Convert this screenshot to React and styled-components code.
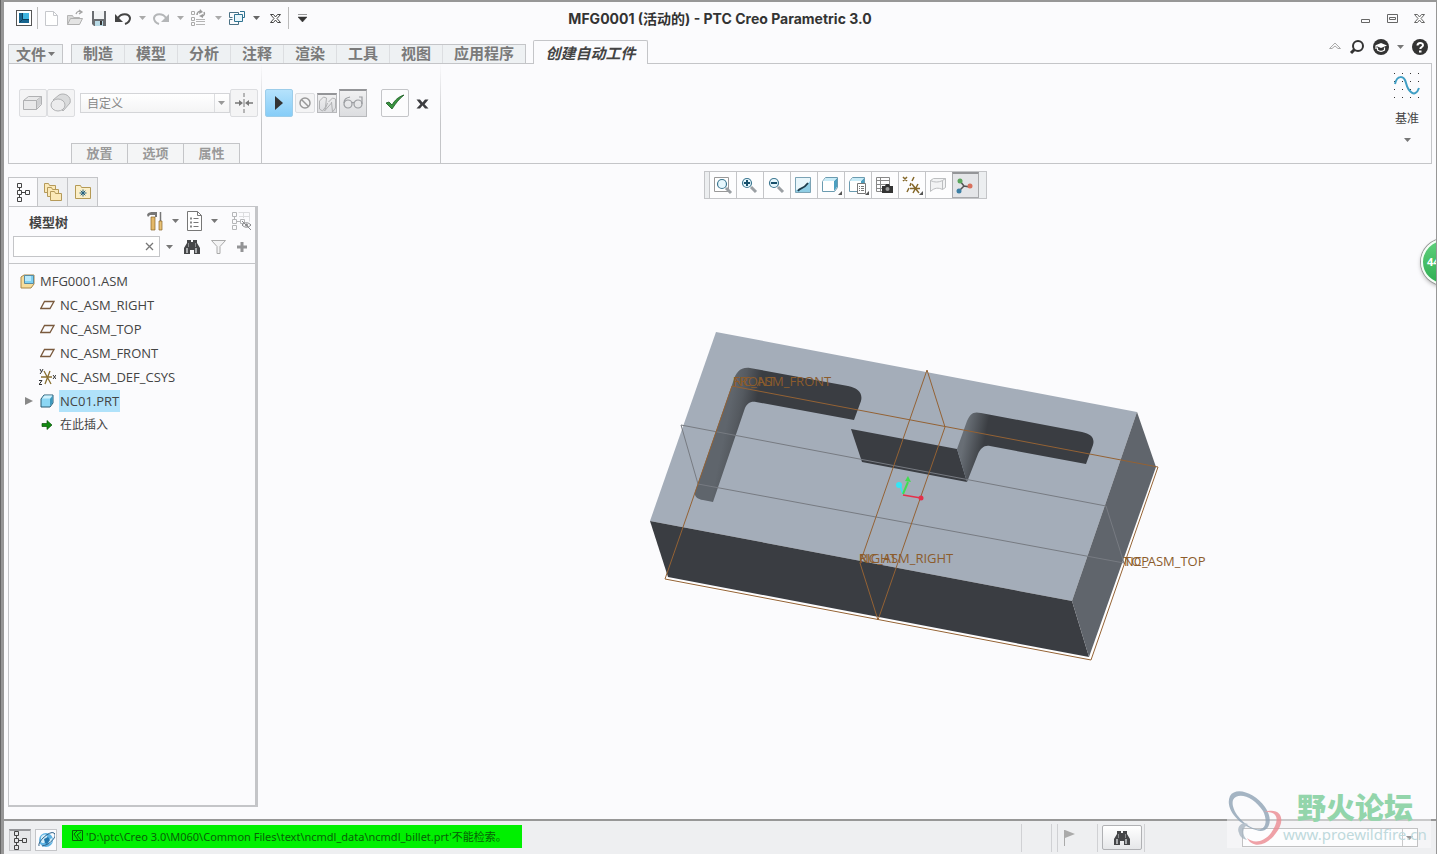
import React, {useState} from 'react'
import styled, {createGlobalStyle, css} from 'styled-components'

const caretPath = 'M0 0h7L3.5 4z'

const Caret = ({color = '#777'}) => (
    <svg width="7" height="4" viewBox="0 0 7 4"><path d={caretPath} fill={color} /></svg>
)

const Icon = ({w = 18, h = 18, children}) => (
    <svg width={w} height={h} viewBox={`0 0 ${w} ${h}`} fill="none">{children}</svg>
)

/* ---------- quick access icons ---------- */
const LogoIcon = () => (
    <Icon>
        <rect x="1.5" y="1.5" width="15" height="15" fill="#fff" stroke="#555" />
        <path d="M4 4h10v10H4z" fill="#17658f" />
        <path d="M8 4h6v6H8z" fill="#3fb4df" />
        <path d="M7.500 4v6.500H14M4.500 13.500l3-3" stroke="#0c3f5c" />
    </Icon>
)
const NewIcon = () => (
    <Icon>
        <path d="M3.500 2.500h8l4 4v10h-12z" fill="#fff" stroke="#c6c8cc" />
        <path d="M11.500 2.500v4h4" stroke="#c6c8cc" />
    </Icon>
)
const OpenIcon = () => (
    <Icon>
        <path d="M1.500 15.500v-9h5l1 2h6v2" fill="#d8d8d8" stroke="#b5b5b5" />
        <path d="M4.500 9.500h12l-3 6h-12z" fill="#e4e4e4" stroke="#b0b0b0" />
        <path d="M10 5c1-3 3-3 5-2M13 1l3 2-3 2" stroke="#a5a5a5" strokeWidth="1.300" />
    </Icon>
)
const SaveIcon = () => (
    <Icon>
        <path d="M2 2h14v15H4l-2-2z" fill="#6a6d71" />
        <path d="M4 2h10v8H4z" fill="#f1f3f5" />
        <path d="M5 12h8v5H5z" fill="#b8dae6" />
        <path d="M10 12h2v4h-2z" fill="#333" />
    </Icon>
)
const UndoIcon = () => (
    <Icon>
        <path d="M4 9c3-5 11-5 12 0 0 3-2 5-5 6" stroke="#444" strokeWidth="2" />
        <path d="M1 5v8h8z" fill="#444" />
    </Icon>
)
const RedoIcon = () => (
    <Icon>
        <path d="M14 9C11 4 3 4 2 9c0 3 2 5 5 6" stroke="#b4b6b8" strokeWidth="2" />
        <path d="M17 5v8H9z" fill="#b4b6b8" />
    </Icon>
)
const RegenIcon = () => (
    <Icon>
        <path d="M1.500 2.500h3v3h-3zM1.500 8.500h3v3h-3zM1.500 13.500h3v3h-3z" stroke="#aaa" />
        <path d="M6 10.500h9M6 12.500h9M6 15.500h9" stroke="#b5b5b5" />
        <path d="M7 6c0-3 2-4 4-3M14 3c1 2 0 4-2 4" stroke="#999" strokeWidth="1.500" />
        <path d="M10 0l3 3-4 2zM13 5l-4 2 4 2z" fill="#999" />
    </Icon>
)
const WindowsIcon = () => (
    <Icon>
        <path d="M1.500 8.500v-5h9v3" stroke="#4a7184" />
        <path d="M1.500 10.500v5h9v-3M1.500 10.500h3M1.500 8.500h3" stroke="#4a7184" />
        <path d="M6.500 5.500h8v7h-8z" fill="#e9f6fb" stroke="#2f7391" />
        <path d="M12 2.500h4.500v6H15" stroke="#2f7391" />
    </Icon>
)
const CrossIcon = ({color = '#444'}) => (
    <Icon w={13} h={13}>
        <path d="M1.500 2.500h3l2 2.500 2-2.500h3l-3.500 4 3.500 4h-3l-2-2.500-2 2.500h-3l3.500-4z" fill="#fff" stroke={color} />
    </Icon>
)
const MinIcon = () => <Icon w={13} h={13}><path d="M2.500 7.500h8v3h-8z" stroke="#666" /></Icon>
const MaxIcon = () => (
    <Icon w={13} h={13}><path d="M1.500 2.500h10v8h-10zM3.500 5.500h6v2h-6z" stroke="#666" /></Icon>
)

/* ---------- help icons ---------- */
const ChevronUp = () => (
    <Icon w={12} h={10}><path d="M.5 6.500L6 1l5.500 5.500H9L6 4 3 6.500z" stroke="#aaa" /></Icon>
)
const SearchIcon = () => (
    <Icon w={16} h={16}>
        <circle cx="9" cy="7" r="5" stroke="#333" strokeWidth="2" />
        <path d="M5.500 10.500L2 14" stroke="#333" strokeWidth="3" />
    </Icon>
)
const LearnIcon = () => (
    <Icon w={16} h={16}>
        <circle cx="8" cy="8" r="8" fill="#333" />
        <path d="M2 6.500L8 4l6 2.500L8 9z" fill="#fff" />
        <path d="M4.500 8.500V11c2 1.500 5 1.500 7 0V8.500M3 7v3" stroke="#fff" strokeWidth="1.200" />
    </Icon>
)
const HelpIcon = () => (
    <Icon w={16} h={16}>
        <circle cx="8" cy="8" r="8" fill="#333" />
        <path d="M5.500 6.500c0-3.500 5.500-3.300 5.500-.3C11 8 8.300 8 8.300 10" stroke="#fff" strokeWidth="2" />
        <path d="M7 11.500h2.500v2H7z" fill="#fff" />
    </Icon>
)

/* ---------- dashboard icons ---------- */
const BlockIcon = () => (
    <Icon w={22} h={20}>
        <path d="M1.500 7.500l5-4h13v8l-5 5h-13z" fill="#e9e9ea" stroke="#b0b1b3" />
        <path d="M1.500 7.500h13v9M14.500 7.500l5-4" stroke="#b0b1b3" />
        <path d="M15 8l4-4v7l-4 4z" fill="#cfd0d2" />
    </Icon>
)
const RoundIcon = () => (
    <Icon w={22} h={20}>
        <path d="M3 7l6-5c5-3 13 1 11 8l-7 8z" fill="#dadbdc" stroke="#b0b1b3" />
        <ellipse cx="8" cy="12" rx="7" ry="6" fill="#ececed" stroke="#b0b1b3" />
    </Icon>
)
const MergeIcon = () => (
    <Icon w={18} h={20}>
        <path d="M9 0v4M9 6v8M9 16v4" stroke="#777" />
        <path d="M0 10h6M12 10h6" stroke="#777" strokeWidth="1.500" />
        <path d="M4 7l4 3-4 3zM14 7l-4 3 4 3z" fill="#777" />
    </Icon>
)
const PlayIcon = () => <Icon w={12} h={16}><path d="M2 1l8 7-8 7z" fill="#333" /></Icon>
const BanIcon = () => (
    <Icon w={14} h={14}>
        <circle cx="7" cy="7" r="5" stroke="#999" strokeWidth="1.500" />
        <path d="M3.500 3.500l7 7" stroke="#999" strokeWidth="1.500" />
    </Icon>
)
const MeshIcon = () => (
    <Icon w={18} h={18}>
        <path d="M1.500 6l4-4 3 1-1 9-3 4-3-2zM10.500 7l4-4 3 1v9l-3 4-1-10M9.500 8l-3 8 7-8" stroke="#b0b1b3" />
    </Icon>
)
const GlassesIcon = () => (
    <Icon w={20} h={16}>
        <circle cx="5" cy="8" r="4" stroke="#9a9ca0" strokeWidth="1.200" />
        <circle cx="15" cy="8" r="4" stroke="#9a9ca0" strokeWidth="1.200" />
        <path d="M1 7c0-4 2-5 6-6M19 8V1h-3M9 7c1-1 1-1 2 0" stroke="#9a9ca0" strokeWidth="1.200" />
    </Icon>
)
const CheckIcon = () => (
    <Icon w={20} h={18}>
        <path d="M1 9l3-1 3 3c3-5 6-8 12-10C14 5 11 9 7 15z" fill="#3a9440" stroke="#17591f" strokeWidth=".8" />
    </Icon>
)
const QuitIcon = () => (
    <Icon w={13} h={13}><path d="M.5 2.500H4l2.500 3 2.500-3h3.500L8.600 7.200l3.900 4.300H9l-2.500-3-2.500 3H.5l3.900-4.300z" fill="#3c3d40" /></Icon>
)
const DatumIcon = () => (
    <Icon w={28} h={28}>
        {[1, 9, 17, 25].map(y => [1, 9, 17, 25].map(x => (
            <path key={`${x}-${y}`} d={`M${x} ${y}h1v1h-1z`} fill="#333" />
        )))}
        <path d="M2 12C4 3 11 3 13 11s9 16 13 5" stroke="#3f9ec4" strokeWidth="2" />
    </Icon>
)

/* ---------- navigator icons ---------- */
const TreeIcon = ({color = '#444'}) => (
    <Icon w={14} h={20}>
        <path d="M1.500 1.500h4v4h-4zM1.500 8.500h4v4h-4zM9.500 8.500h4v4h-4zM1.500 15.500h4v4h-4zM3.500 5.500v3M3.500 12.500v3M5.500 10.500h4" stroke={color} />
    </Icon>
)
const Folder = ({x, y}) => (
    <path d={`M${x} ${y}h4l1 2h6v7H${x}z`} fill="#fbe9b8" stroke="#b59a5a" />
)
const FoldersIcon = () => (
    <Icon w={20} h={20}><Folder x={1.5} y={1.5} /><Folder x={4.5} y={5.5} /><Folder x={7.5} y={9.5} /></Icon>
)
const FavIcon = () => (
    <Icon w={18} h={16}>
        <path d="M1.500 14.500v-13h5l1 2h9v11z" fill="#fbefc8" stroke="#b59a55" />
        <path d="M9 5.500v7M5.500 9h7M6.700 6.700l4.600 4.600M11.300 6.700l-4.600 4.600" stroke="#1f5f80" />
    </Icon>
)
const ToolsIcon = () => (
    <Icon w={18} h={20}>
        <path d="M1 4c1-3 4-3 6-3h4v5H9V4H4L2 6z" fill="#777" />
        <path d="M5 6h4v13H5z" fill="#e3b869" stroke="#8a6525" strokeWidth=".7" />
        <path d="M14.500 1v9" stroke="#777" strokeWidth="1.500" />
        <path d="M13 10h3v9h-3z" fill="#e8c277" stroke="#8a6525" strokeWidth=".7" />
    </Icon>
)
const ListIcon = () => (
    <Icon w={17} h={20}>
        <path d="M1.500.5h10l4 4v15h-14z" fill="#fff" stroke="#777" />
        <path d="M11.500.5v4h4M7.500 7.500h5M7.500 11.500h5M7.500 15.500h5" stroke="#777" />
        <path d="M4 6.500h2v2H4zM4 10.500h2v2H4zM4 14.500h2v2H4z" fill="#888" />
    </Icon>
)
const HiddenTreeIcon = () => (
    <Icon w={21} h={20}>
        <path d="M1.500 1.500h4v4h-4zM1.500 8.500h4v4h-4zM9.500 8.500h4v4h-4zM1.500 14.500h4v4h-4zM3.500 5.500v3M5.500 10.500h4" stroke="#b5b6b8" />
        <path d="M7.500 1.500h11v9M12.500 2v5M8 5.500h10" stroke="#dcdddf" />
        <path d="M11 14c3-3 6-3 9 0-3 3-6 3-9 0zM11 10l9 9" stroke="#88898c" />
        <circle cx="15.500" cy="14" r="1.500" fill="#88898c" />
    </Icon>
)
const BinocularsIcon = () => (
    <Icon w={18} h={16}>
        <path d="M4 1h4v2h2V1h4v3l3 5v6h-6v-4H7v4H1V9l3-5z" fill="#454648" />
        <path d="M3 9h2v5H3zM12 9h2v5h-2z" fill="#a9abad" />
        <path d="M5 4h1v4H5zM12 4h1v4h-1z" fill="#8a8c8e" />
    </Icon>
)
const FunnelIcon = () => (
    <Icon w={17} h={16}><path d="M1.500 1.500h14l-5.500 6v7H7v-7z" fill="#f3f3f4" stroke="#aaa" /></Icon>
)
const PlusIcon = () => <Icon w={12} h={12}><path d="M1 6h10M6 1v10" stroke="#939496" strokeWidth="3" /></Icon>

const AsmIcon = () => (
    <Icon w={15} h={15}>
        <path d="M1 3l3-2h10v9l-3 4H1z" fill="#f5dc9c" stroke="#a98644" />
        <path d="M4.500 1.500h9v8h-9z" fill="#7dd0f2" stroke="#5a8ba0" />
        <path d="M5 2h6v5H5z" fill="#b9e9fb" />
    </Icon>
)
const PlaneIcon = () => <Icon w={15} h={10}><path d="M4.500 1.500h9.500l-4 7H.8z" stroke="#7a5a3e" strokeWidth="1.300" /></Icon>
const CsysIcon = () => (
    <Icon w={17} h={16}>
        <path d="M2 8h11M5 2l7 13M11 2L6 15" stroke="#8a7030" strokeWidth="1.300" />
        <path d="M1 0l1.500 3L4 0M2.500 3L1 5M14 6l3 4M17 6l-3 4M0 11.500h3l-3 4h3" stroke="#333" />
    </Icon>
)
const PartIcon = () => (
    <Icon w={14} h={14}>
        <path d="M1 5l3-4h9v8l-3 4H1z" fill="#8bd6f4" stroke="#2b5b72" />
        <path d="M2 4.500l2.500-3h8l-2.500 3z" fill="#d0f1fc" />
        <path d="M10 5l2.500-3v7L10 12z" fill="#3d98bd" />
    </Icon>
)
const InsertIcon = () => <Icon w={12} h={12}><path d="M1 4.500h5v-3L11 6l-5 4.500v-3H1z" fill="#118a11" stroke="#0a500a" strokeWidth=".7" /></Icon>
const GlobeIcon = () => (
    <Icon w={17} h={17}>
        <circle cx="8" cy="9" r="7" fill="#5fb2e2" />
        <path d="M3 6c2-3 5-3 6-1s-3 3-2 5-3 3-4 1zM10 9l4-2c1 3 0 5-3 6z" fill="#d4eefa" />
        <path d="M6 8l4-2 2 3-3 4-2-1z" fill="#2477ae" />
        <path d="M1 15C-1 11 12-1 16 2s-4 12-12 13" stroke="#2c5f86" />
    </Icon>
)
const FlagIcon = () => <Icon w={14} h={18}><path d="M2.500 1v16" stroke="#aaa" /><path d="M3 1l10 4-10 4z" fill="#aaa" /></Icon>
const GlyphIcon = () => (
    <Icon w={13} h={13}><path d="M1.500 1.500h10v10h-10zM6 2L3 5l4 6M10 3L6 6l4 5" stroke="#086008" /></Icon>
)

/* ---------- graphics toolbar icons ---------- */
const Lens = ({x, y}) => (
    <>
        <path d={`M${x + 4} ${y + 4}l5 5`} stroke="#9a9fa3" strokeWidth="3" />
        <circle cx={x} cy={y} r="4.500" fill="#e6f7fd" stroke="#3d7791" strokeWidth="1.200" />
    </>
)
const cube = <><path d="M1.500 5.500l3-4h12v10l-3 4h-12z" fill="#fff" stroke="#6b9bb0" /><path d="M13 5l3-3v9l-3 4z" fill="#4c9fc0" /><path d="M2 5l3-3h11l-3 3z" fill="#c9ecf8" /></>
const viewIcons = [
    {label: '重新调整', icon: <><path d="M1.500 1.500h14v14h-14z" fill="#fff" stroke="#999" /><Lens x={9} y={8} /></>},
    {label: '放大', icon: <><Lens x={7} y={7} /><path d="M4 7h6M7 4v6" stroke="#17506c" strokeWidth="2" /></>},
    {label: '缩小', icon: <><Lens x={7} y={7} /><path d="M4 7h6" stroke="#17506c" strokeWidth="2" /></>},
    {label: '重画', icon: <><path d="M1.500 1.500h15v15h-15z" fill="#8fcde4" stroke="#7ba3b5" /><path d="M2 2h14v3C13 9 8 13 2 14z" fill="#e8f6fb" /><path d="M4 15c2-4 5-1 10-8" stroke="#1f3d4c" strokeWidth="1.800" /></>},
    {label: '显示样式', menu: true, icon: cube},
    {label: '已保存方向', menu: true, icon: <>{cube}<path d="M9.500 7.500h8v10h-8z" fill="#fff" stroke="#777" /><path d="M11 10.500h1M13 10.500h3M11 12.500h1M13 12.500h3M11 14.500h1M13 14.500h3" stroke="#777" /></>},
    {label: '视图管理器', icon: <><path d="M1.500 1.500h13v14h-13zM1.500 4.500h13M1.500 8.500h13M1.500 12.500h13M5.500 1.500v14" stroke="#888" /><path d="M7 10h3l1-2h3l1 2h3v7H7z" fill="#333" /><circle cx="12.500" cy="13" r="2" fill="#9a9a9a" /></>},
    {label: '基准显示过滤器', menu: true, icon: <><path d="M1 1l4 4M5 1L1 5M12 1L10 5M9 7l-1 3M7 12l-2 4M10 8l7 9M16 8l-5 9M8 12.500h10" stroke="#85682a" strokeWidth="1.500" /></>},
    {label: '注释显示', icon: <><path d="M1.500 4.500c4 2 8 2 12 0v9c-4-2-8-2-12 2zM1.500 4.500l3-2h12v9l-3 2M13.500 4.500l3-2" fill="#f2f3f4" stroke="#bcbec0" /></>},
    {label: '旋转中心', on: true, icon: <><path d="M5 4l4 5 6 1M9 9l-5 5" stroke="#555" strokeWidth="1.500" /><circle cx="5" cy="4" r="2.500" fill="#5aa55c" /><circle cx="15" cy="9" r="2.500" fill="#d9705c" /><circle cx="4" cy="14" r="2.500" fill="#3c7fa5" /></>},
]

const quickItems = [
    {label: '新建', icon: <NewIcon />},
    {label: '打开', icon: <OpenIcon />},
    {label: '保存', icon: <SaveIcon />},
    {label: '撤消', icon: <UndoIcon />, menu: '#aaa'},
    {label: '重做', icon: <RedoIcon />, menu: '#aaa'},
    {label: '重新生成', icon: <RegenIcon />, menu: '#aaa'},
    {label: '窗口', icon: <WindowsIcon />, menu: '#666'},
    {label: '关闭', icon: <CrossIcon />},
]

const tabs = ['制造', '模型', '分析', '注释', '渲染', '工具', '视图', '应用程序']

const treeItems = [
    {name: 'NC_ASM_RIGHT', icon: <PlaneIcon />},
    {name: 'NC_ASM_TOP', icon: <PlaneIcon />},
    {name: 'NC_ASM_FRONT', icon: <PlaneIcon />},
    {name: 'NC_ASM_DEF_CSYS', icon: <CsysIcon />},
    {name: 'NC01.PRT', icon: <PartIcon />, expandable: true},
    {name: '在此插入', icon: <InsertIcon />, small: true},
]

const Model = () => (
    <Canvas viewBox="258 199 1178 620" role="img" aria-label="NC01">
        <defs>
            <linearGradient id="wallLeft" gradientUnits="userSpaceOnUse" x1="733" y1="390" x2="758" y2="395">
                <stop offset="0" stopColor="#5f656c" />
                <stop offset=".4" stopColor="#555a60" />
                <stop offset="1" stopColor="#3a3d42" />
            </linearGradient>
            <linearGradient id="wallMid" gradientUnits="userSpaceOnUse" x1="966" y1="430" x2="986" y2="434">
                <stop offset="0" stopColor="#686e75" />
                <stop offset=".4" stopColor="#565b61" />
                <stop offset="1" stopColor="#3a3d42" />
            </linearGradient>
        </defs>
        <path d="M1157 468l-67 191-425-80" stroke="#fff" strokeWidth="3" fill="none" />
        <path d="M716 332l421 80-65 189-422-80z" fill="#a4adb9" />
        <path d="M650 521l422 80 17 56-421-80z" fill="#3a3d42" />
        <path d="M1137 412l19 55-67 190-17-56z" fill="#60656c" />
        <path d="M695 492l38-110c3-10 7-15 17-14l98 18c10 2 15 7 13 15l-7 19-98-18c-6-1-9 2-11 6l-32 94-10-2c-6-1-9-4-8-8z" fill="url(#wallLeft)" />
        <path d="M851 429l106 20 10 33-105-20z" fill="#3a3d42" />
        <path d="M957 449l10-28c3-7 6-10 14-8l101 19c9 2 13 6 11 13l-7 19-96-18c-6-1-9 2-12 8l-11 28z" fill="url(#wallMid)" />
        <g fill="none" stroke="#777b82">
            <path d="M681 425l425 81 18 57-426-79z" />
        </g>
        <g fill="none" stroke="#946234">
            <path d="M732 386l426 81-67 193-426-81z" />
            <path d="M927 370l18 57-67 193-18-57z" />
        </g>
        <path d="M903 494l-3-9" stroke="#2fe6f2" strokeWidth="1.500" />
        <path d="M903 494l5-12" stroke="#42dd50" strokeWidth="2" />
        <path d="M908 476l3 6-6-1z" fill="#42dd50" />
        <path d="M903 495l18 3" stroke="#e5304a" strokeWidth="1.500" />
        <circle cx="899" cy="485" r="3" fill="#35e5f5" />
        <circle cx="921" cy="498" r="2.500" fill="#e5304a" />
        <PlaneLabel x="733" y="386">FRONT</PlaneLabel>
        <PlaneLabel x="733" y="386">NC_ASM_FRONT</PlaneLabel>
        <PlaneLabel x="859" y="563">RIGHT</PlaneLabel>
        <PlaneLabel x="859" y="563">NC_ASM_RIGHT</PlaneLabel>
        <PlaneLabel x="1124" y="566">TOP</PlaneLabel>
        <PlaneLabel x="1124" y="566">NC_ASM_TOP</PlaneLabel>
    </Canvas>
)

export default function App() {
    const [selected, setSelected] = useState('NC01.PRT')
    const [query, setQuery] = useState('')

    return (
        <>
            <GlobalStyle />
            <Window>
                <TitleBar>
                    <QuickBar>
                        <QuickButton aria-label="Creo"><LogoIcon /></QuickButton>
                        <Separator />
                        {quickItems.map(item => (
                            <React.Fragment key={item.label}>
                                <QuickButton aria-label={item.label}>{item.icon}</QuickButton>
                                {item.menu && <CaretButton aria-label={`${item.label}菜单`}><Caret color={item.menu} /></CaretButton>}
                            </React.Fragment>
                        ))}
                        <Separator />
                        <QuickButton aria-label="自定义快速访问工具栏">
                            <Icon w={9} h={8}><path d="M0 .5h9M0 3h9L4.500 8z" fill="#333" stroke="#333" strokeWidth=".5" /></Icon>
                        </QuickButton>
                    </QuickBar>
                    <Title>MFG0001 (活动的) - PTC Creo Parametric 3.0</Title>
                    <WindowButtons>
                        <PlainButton aria-label="最小化"><MinIcon /></PlainButton>
                        <PlainButton aria-label="最大化"><MaxIcon /></PlainButton>
                        <PlainButton aria-label="关闭窗口"><CrossIcon color="#666" /></PlainButton>
                    </WindowButtons>
                </TitleBar>

                <TabRow>
                    <FileTab>文件<Caret /></FileTab>
                    <TabGroup>
                        {tabs.map(tab => <Tab key={tab}>{tab}</Tab>)}
                    </TabGroup>
                    <ActiveTab>创建自动工件</ActiveTab>
                    <HelpButtons>
                        <PlainButton aria-label="最小化功能区"><ChevronUp /></PlainButton>
                        <PlainButton aria-label="搜索"><SearchIcon /></PlainButton>
                        <PlainButton aria-label="学习"><LearnIcon /></PlainButton>
                        <PlainButton aria-label="学习菜单"><Caret /></PlainButton>
                        <PlainButton aria-label="帮助"><HelpIcon /></PlainButton>
                    </HelpButtons>
                </TabRow>

                <Ribbon>
                    <RibbonSection>
                        <Controls>
                            <ToolButton aria-label="矩形工件"><BlockIcon /></ToolButton>
                            <ToolButton aria-label="圆形工件"><RoundIcon /></ToolButton>
                            <SelectBox>
                                <select aria-label="类型" defaultValue="自定义"><option>自定义</option></select>
                                <Caret color="#999" />
                            </SelectBox>
                            <ToolButton aria-label="对齐"><MergeIcon /></ToolButton>
                        </Controls>
                        <SubTabs>
                            <button>放置</button>
                            <button>选项</button>
                            <button>属性</button>
                        </SubTabs>
                    </RibbonSection>
                    <RibbonSection $tight>
                        <Controls>
                            <ToolButton $blue aria-label="继续"><PlayIcon /></ToolButton>
                            <ToolButton $small aria-label="无预览"><BanIcon /></ToolButton>
                            <ToolButton $small $pressed aria-label="分离"><MeshIcon /></ToolButton>
                            <ToolButton $pressed aria-label="预览"><GlassesIcon /></ToolButton>
                            <Spacer />
                            <ToolButton $white aria-label="确定"><CheckIcon /></ToolButton>
                            <QuitButton aria-label="取消"><QuitIcon /></QuitButton>
                        </Controls>
                    </RibbonSection>
                    <DatumButton>
                        <DatumIcon />
                        <span>基准</span>
                        <Caret />
                    </DatumButton>
                </Ribbon>

                <Main>
                    <Navigator>
                        <NavTabs>
                            <NavTab $active aria-label="模型树"><TreeIcon /></NavTab>
                            <NavTab aria-label="文件夹浏览器"><FoldersIcon /></NavTab>
                            <NavTab aria-label="收藏夹"><FavIcon /></NavTab>
                        </NavTabs>
                        <NavBody>
                            <NavHeader>
                                <h2>模型树</h2>
                                <PlainButton aria-label="设置"><ToolsIcon /></PlainButton>
                                <CaretButton aria-label="设置菜单"><Caret /></CaretButton>
                                <PlainButton aria-label="显示"><ListIcon /></PlainButton>
                                <CaretButton aria-label="显示菜单"><Caret /></CaretButton>
                                <HideButton aria-label="隐藏"><HiddenTreeIcon /></HideButton>
                            </NavHeader>
                            <SearchRow>
                                <SearchBox>
                                    <input aria-label="搜索模型树" value={query} onChange={e => setQuery(e.target.value)} />
                                    <PlainButton aria-label="清除" onClick={() => setQuery('')}>
                                        <Icon w={9} h={9}><path d="M1 1l7 7M8 1L1 8" stroke="#777" strokeWidth="1.300" /></Icon>
                                    </PlainButton>
                                </SearchBox>
                                <CaretButton aria-label="搜索选项"><Caret /></CaretButton>
                                <SearchTools>
                                    <PlainButton aria-label="查找"><BinocularsIcon /></PlainButton>
                                    <PlainButton aria-label="过滤"><FunnelIcon /></PlainButton>
                                    <PlainButton aria-label="添加"><PlusIcon /></PlainButton>
                                </SearchTools>
                            </SearchRow>
                            <Tree>
                                <TreeRow $root><TreeGlyph><AsmIcon /></TreeGlyph><TreeName>MFG0001.ASM</TreeName></TreeRow>
                                {treeItems.map(item => (
                                    <TreeRow key={item.name}>
                                        <Expander>{item.expandable && <Icon w={8} h={10}><path d="M0 1l8 4-8 4z" fill="#888" /></Icon>}</Expander>
                                        <TreeGlyph>{item.icon}</TreeGlyph>
                                        <TreeName
                                            $small={item.small}
                                            $selected={selected === item.name}
                                            onClick={() => setSelected(item.name)}
                                        >
                                            {item.name}
                                        </TreeName>
                                    </TreeRow>
                                ))}
                            </Tree>
                        </NavBody>
                    </Navigator>

                    <Viewport>
                        <ViewBar>
                            {viewIcons.map(item => (
                                <ViewButton key={item.label} $on={item.on} aria-label={item.label}>
                                    <Icon w={22} h={20}>
                                        <g transform="translate(1 1)">{item.icon}</g>
                                        {item.menu && <path d="M22 16v4h-4z" fill="#555" />}
                                    </Icon>
                                </ViewButton>
                            ))}
                        </ViewBar>
                        <Model />
                    </Viewport>
                </Main>

                <StatusBar>
                    <StatusButton $pressed aria-label="导航器"><TreeIcon /></StatusButton>
                    <StatusButton aria-label="浏览器"><GlobeIcon /></StatusButton>
                    <Message>
                        <GlyphIcon />
                        <span>'D:\ptc\Creo 3.0\M060\Common Files\text\ncmdl_data\ncmdl_billet.prt'不能检索。</span>
                    </Message>
                    <StatusTools>
                        <StatusCell $w={30} />
                        <StatusCell $w={6} />
                        <StatusCell $w={40}><FlagIcon /></StatusCell>
                        <StatusCell $w={47}>
                            <FindButton aria-label="查找"><BinocularsIcon /></FindButton>
                        </StatusCell>
                        <StatusCell />
                        <FilterBox>
                            <select aria-label="选择过滤器"><option /></select>
                            <Caret color="#333" />
                        </FilterBox>
                    </StatusTools>
                </StatusBar>

                <Badge>44</Badge>
                <Watermark>
                    <svg width="60" height="60" viewBox="0 0 60 60" fill="none">
                        <path fillRule="evenodd" d="M3 8C9-2 28 5 38 19s3 28-9 23C14 38-3 22 3 8zM6 12c-3 10 11 26 23 29 10 2 12-8 7-18C27 9 11 3 6 12z" fill="#8fa3b5" />
                        <path d="M21 36c-6-3-12 3-9 9 1 4 4 6 8 7-5-5-5-12 1-16z" fill="#a9b6c2" />
                        <path d="M37 24c18-6 22 9 12 21-9 13-23 16-29 5 7 6 17 4 24-5 8-11 9-22-7-21z" fill="#ec8b92" />
                    </svg>
                    <div>
                        <strong>野火论坛</strong>
                        <span>www.proewildfire.cn</span>
                    </div>
                </Watermark>
            </Window>
        </>
    )
}

const GlobalStyle = createGlobalStyle`
* {
    box-sizing: border-box;
}
body {
    margin: 0;
    border-left: 1px solid #666;
    background: #fbfbfd;
    color: #444;
    font-family: "Open Sans", "Noto Sans CJK SC", sans-serif;
    font-size: 12px;
}
button, input, select {
    font: inherit;
    color: inherit;
    padding: 0;
    margin: 0;
    border: 0;
    background: none;
    border-radius: 0;
}
svg {
    display: block;
    flex: none;
}
`

const Window = styled.div`
    position: relative;
    overflow: hidden;
    min-height: 100vh;
    display: flex;
    flex-direction: column;
    border: solid #979797;
    border-width: 2px 1px 0 3px;
    background: #fbfbfd;
`

const center = css`
    display: flex;
    align-items: center;
    justify-content: center;
`

const PlainButton = styled.button`
    ${center}
`

const TitleBar = styled.header`
    display: grid;
    grid-template-columns: 1fr auto 1fr;
    align-items: center;
    height: 32px;
`

const QuickBar = styled.div`
    display: flex;
    align-items: center;
    padding-left: 8px;
`

const QuickButton = styled.button`
    ${center}
    width: 24px;
    height: 24px;
`

const CaretButton = styled.button`
    ${center}
    width: 14px;
    height: 20px;
`

const Separator = styled.span`
    width: 1px;
    height: 22px;
    margin: 0 1px;
    background: #bbb;
`

const Title = styled.h1`
    margin: 0;
    font: 700 14px Inter, "Noto Sans CJK SC", sans-serif;
    color: #333;
    white-space: nowrap;
`

const WindowButtons = styled.div`
    display: flex;
    justify-content: flex-end;
    gap: 14px;
    padding-right: 10px;
`

const TabRow = styled.nav`
    display: flex;
    align-items: flex-end;
    height: 29px;
    padding: 0 8px 0 4px;
    font-size: 15px;
    font-weight: 700;
    color: #7a7a7a;
`

const tabBox = css`
    height: 20px;
    line-height: 16px;
    background: #eef1f3;
    border: 1px solid #c4c5c8;
    white-space: nowrap;
`

const FileTab = styled.button`
    ${tabBox}
    ${center}
    gap: 2px;
    width: 55px;
    margin-right: 8px;
    margin-bottom: -1px;
`

const TabGroup = styled.div`
    ${tabBox}
    display: flex;
    margin-right: 7px;
    margin-bottom: -1px;
`

const Tab = styled.button`
    padding: 0 11px 2px;
    & + & {
        border-left: 1px solid #dcdee1;
    }
`

const ActiveTab = styled.button`
    position: relative;
    height: 24px;
    width: 115px;
    margin-bottom: -1px;
    background: #fbfbfd;
    border: 1px solid #c4c5c8;
    border-bottom: 0;
    border-radius: 2px 2px 0 0;
    font-style: italic;
    color: #444;
    white-space: nowrap;
`

const HelpButtons = styled.div`
    display: flex;
    align-items: center;
    gap: 8px;
    margin-left: auto;
    margin-bottom: 8px;
`

const Ribbon = styled.section`
    display: flex;
    height: 101px;
    margin: 0 4px;
    border: 1px solid #c4c5c8;
`

const RibbonSection = styled.div`
    display: flex;
    flex-direction: column;
    justify-content: space-between;
    padding: ${p => p.$tight ? '25px 8px 0 3px' : '25px 3px 0 10px'};
    border-right: 1px solid;
    border-image: linear-gradient(#fbfbfd, #c4c5c8 60%) 1;
`

const Controls = styled.div`
    display: flex;
    align-items: center;
`

const ToolButton = styled.button`
    ${center}
    width: ${p => p.$small ? 20 : 28}px;
    height: ${p => p.$small ? 20 : 28}px;
    margin-right: ${p => p.$small ? 2 : 0}px;
    background: #f4f4f5;
    border: 1px solid #dcdde0;
    border-radius: 2px;
    ${p => p.$blue && css`
        background: linear-gradient(#b5e2fc, #86cdf8);
        border-color: #9ccdea;
        margin-right: 2px;
    `}
    ${p => p.$white && css`
        background: #fcfcfd;
        border-color: #c4c5c8;
    `}
    ${p => p.$pressed && css`
        background: linear-gradient(#f0f0f1, #dcdde0);
        border-color: #b8b9bc;
        border-top: 2px solid #949598;
        border-radius: 0;
    `}
`

const Spacer = styled.span`
    width: 14px;
`

const QuitButton = styled(PlainButton)`
    width: 20px;
    height: 28px;
    margin-left: 3px;
`

const SelectBox = styled.div`
    display: flex;
    align-items: center;
    width: 150px;
    height: 20px;
    margin: 0 0 0 5px;
    padding-right: 4px;
    border: 1px solid #d4d5d8;
    background: linear-gradient(#fff, #f4f4f5);
    select {
        appearance: none;
        flex: 1;
        height: 18px;
        padding-left: 6px;
        margin-right: 3px;
        border-right: 1px solid #dcdde0;
        color: #888;
    }
`

const SubTabs = styled.div`
    display: flex;
    padding-left: 52px;
    font-size: 13px;
    font-weight: 700;
    line-height: 18px;
    color: #999;
    button {
        width: 57px;
        height: 20px;
        padding-bottom: 1px;
        border: 1px solid #c4c5c8;
        border-bottom: 0;
        background: #f4f5f6;
    }
    button + button {
        margin-left: -1px;
    }
`

const DatumButton = styled.button`
    display: flex;
    flex-direction: column;
    align-items: center;
    align-self: flex-start;
    gap: 8px;
    margin: 8px 10px 0 auto;
    line-height: 22px;
`

const Main = styled.main`
    flex: 1;
    display: flex;
`

const Navigator = styled.aside`
    display: flex;
    flex-direction: column;
    width: 250px;
    margin: 13px 0 12px 4px;
`

const NavTabs = styled.div`
    display: flex;
`

const NavTab = styled.button`
    ${center}
    width: 30px;
    height: 30px;
    margin-bottom: -1px;
    border: 1px solid #c4c5c8;
    border-left-width: ${p => p.$active ? 1 : 0}px;
    background: #eff0f2;
    ${p => p.$active && css`
        background: #fbfbfd;
        border-bottom-color: #fbfbfd;
    `}
`

const NavBody = styled.div`
    flex: 1;
    border: 1px solid #c4c5c8;
    border-width: 1px 3px 2px 1px;
`

const NavHeader = styled.div`
    display: flex;
    align-items: center;
    height: 28px;
    gap: 4px;
    padding: 0 3px 0 20px;
    h2 {
        flex: 1;
        margin: 0;
        font-size: 13px;
    }
`

const HideButton = styled(PlainButton)`
    margin-left: 6px;
`

const SearchRow = styled.div`
    display: flex;
    align-items: center;
    height: 29px;
    padding: 0 7px 5px 4px;
    border-bottom: 1px solid #c4c5c8;
`

const SearchTools = styled.div`
    display: flex;
    align-items: center;
    gap: 9px;
    margin-left: auto;
`

const SearchBox = styled.div`
    display: flex;
    align-items: center;
    width: 147px;
    height: 21px;
    margin-right: 2px;
    padding-right: 5px;
    border: 1px solid #c4c5c8;
    background: #fff;
    input {
        flex: 1;
        min-width: 0;
        padding: 0 4px;
        outline: 0;
    }
`

const Tree = styled.ul`
    list-style: none;
    margin: 0;
    padding: 5px 0;
`

const TreeRow = styled.li`
    display: flex;
    align-items: center;
    height: 24px;
    padding-left: ${p => p.$root ? 8 : 14}px;
`

const Expander = styled.span`
    ${center}
    width: 12px;
    margin-right: 2px;
`

const TreeGlyph = styled.span`
    ${center}
    width: 20px;
`

const TreeName = styled.button`
    height: 22px;
    padding: 0 1px;
    margin-left: 2px;
    line-height: 20px;
    font-size: ${p => p.$small ? 12 : 13}px;
    background: ${p => p.$selected ? '#b0e2fa' : 'none'};
`

const Viewport = styled.section`
    flex: 1;
    min-width: 0;
    display: flex;
    flex-direction: column;
    align-items: center;
`

const ViewBar = styled.div`
    display: flex;
    margin: 7px 4px 0 0;
    padding: 0 7px 0 4px;
    border: 1px solid #c4c5c8;
    background: #eceef0;
`

const ViewButton = styled.button`
    ${center}
    width: 27px;
    height: 26px;
    background: ${p => p.$on ? '#e4e5e8' : '#fdfdfe'};
    border-left: 1px solid #c4c5c8;
    ${p => p.$on && css`
        border: 1px solid #a8a9ac;
        border-top: 2px solid #949598;
    `}
`

const Canvas = styled.svg`
    flex: 1;
    width: 100%;
    min-height: 0;
`

const PlaneLabel = styled.text`
    font: 13px "Open Sans", sans-serif;
    fill: #8c5c2c;
`

const StatusBar = styled.footer`
    display: flex;
    align-items: center;
    height: 35px;
    padding-left: 5px;
    border-top: 2px solid #979797;
    background: #eeeff1;
`

const StatusButton = styled.button`
    ${center}
    width: 22px;
    height: 22px;
    margin: 4px 4px 0 0;
    border: 1px solid #c4c5c8;
    background: #fbfbfd;
    ${p => p.$pressed && css`
        background: #e6e7e9;
        border-top: 2px solid #949598;
    `}
`

const Message = styled.output`
    display: flex;
    align-items: center;
    gap: 2px;
    height: 23px;
    margin: 0 0 2px 1px;
    padding: 0 15px 2px 9px;
    background: #00f000;
    color: #086008;
    font-family: "Noto Sans", "Noto Sans CJK SC", sans-serif;
    font-size: 11px;
    white-space: nowrap;
`

const StatusTools = styled.div`
    display: flex;
    align-items: center;
    margin-left: auto;
    padding-right: 18px;
`

const StatusCell = styled.div`
    display: flex;
    align-items: center;
    width: ${p => p.$w || 98}px;
    height: 28px;
    padding-left: 4px;
    border-left: 1px solid #d0d1d4;
`

const FindButton = styled.button`
    ${center}
    width: 40px;
    height: 25px;
    border: 1px solid #b0b1b4;
    border-radius: 2px;
    background: linear-gradient(#fff, #e6e7e9);
`

const FilterBox = styled.div`
    display: flex;
    align-items: center;
    width: 176px;
    height: 19px;
    padding-right: 4px;
    border: 1px solid #888;
    background: #fff;
    select {
        appearance: none;
        flex: 1;
        height: 17px;
        margin-right: 3px;
        border-right: 1px solid #999;
    }
`

const Badge = styled.div`
    position: absolute;
    top: 237px;
    right: -31px;
    width: 46px;
    height: 46px;
    padding-left: 4px;
    line-height: 42px;
    border: 2px solid #f4fff6;
    border-radius: 50%;
    background: linear-gradient(#5fd07c, #2fae52);
    box-shadow: 0 0 0 1px #999, 0 2px 4px #aaa;
    color: #fff;
    font-size: 11px;
    font-weight: bold;
`

const Watermark = styled.div`
    position: absolute;
    right: 5px;
    bottom: 6px;
    display: flex;
    width: 204px;
    height: 60px;
    background: rgba(251, 251, 253, 0.5);
    pointer-events: none;
    svg {
        margin-right: -4px;
        opacity: 0.8;
    }
    div {
        display: flex;
        flex-direction: column;
        align-items: center;
    }
    strong {
        font: 900 29px/36px "Noto Sans CJK SC", sans-serif;
        color: #93d5ab;
    }
    span {
        font: 15px/20px "Noto Sans", sans-serif;
        color: #bfd9dc;
    }
`
